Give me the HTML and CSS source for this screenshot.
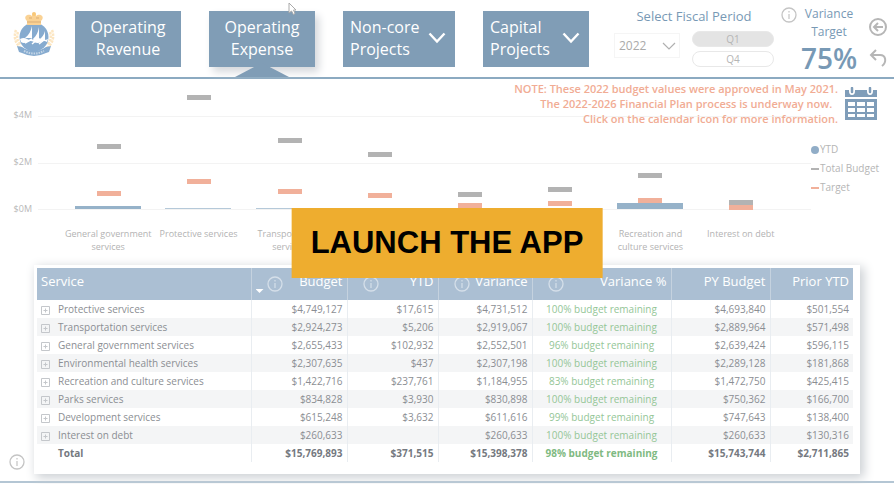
FILE: index.html
```html
<!DOCTYPE html>
<html lang="en">
<head>
<meta charset="utf-8">
<meta name="viewport" content="width=device-width, initial-scale=1">
<title>Operating Expense</title>
<link rel="stylesheet" href="styles.css">
</head>
<body>
<svg class="defs" aria-hidden="true">
  <symbol id="info" viewBox="0 0 16 16"><circle cx="8" cy="8" r="7" fill="none" stroke="currentColor" stroke-width="1.3"/><path d="M8 7v5M8 4v1.5" stroke="currentColor" stroke-width="1.2"/></symbol>
  <symbol id="chevron" viewBox="0 0 18 12"><path d="M1.5 1.5 9 9.5l7.500-8" fill="none" stroke="currentColor" stroke-width="2.400"/></symbol>
  <symbol id="plus" viewBox="0 0 9 9"><path d="M.5.5h8v8h-8zM2.500 4.500h4M4.500 2.500v4" fill="none" stroke="currentColor"/></symbol>
</svg>
<div class="app">
  <header class="header">
    <svg class="logo" viewBox="0 0 42 46" role="img" aria-label="View Royal">
      <g fill="none" stroke="#fce6c2" stroke-width="2.400" stroke-dasharray="2.500 1">
        <path d="M3 18C0 26 3 32 8 36"/><path d="M39 18c3 8 0 14-5 18"/>
        <path d="M5 20c-2 6 0 10 3 13"/><path d="M37 20c2 6 0 10-3 13"/>
      </g>
      <circle cx="21" cy="25" r="14.500" fill="#86abcf"/>
      <path d="M7 27q4-2 7 0t7 0 7 0 7 0l-1 3q-3-2-6 0t-7 0-7 0-6 0z" fill="#fff"/>
      <path d="M19 14v12h-7c4-3 6-7 7-12zM26 15v12h-6c4-4 5-7 6-12zM32 19v9h-6c3-3 5-5 6-9z" fill="#fff"/>
      <path d="M12 31 19 27M19 32l6-5M26 32l5-4" stroke="#fff" stroke-width="1.500"/>
      <path d="M14 9C9 4 16 1 19 4c0-4 4-4 4 0 3-3 10 0 5 5v4H14z" fill="#fad294"/>
      <circle cx="21" cy="2" r="2" fill="#f8c878"/>
      <path d="M14 10h14M16 6h3M23 6h3" stroke="#d9ad77"/>
      <path d="m4 34 5 1q12 8 24 0l5-1-2 6-3 1q-12 6-24 0l-3-1z" fill="#86abcf"/>
      <path d="M11 39q10 5 20 0" fill="none" stroke="#c5d6e6" stroke-width="2" stroke-dasharray="1.500 1"/>
    </svg>
    <nav class="nav">
      <button class="tab">Operating<br>Revenue</button>
      <div class="active">
        <button class="tab" aria-current="page">Operating<br>Expense</button>
      </div>
      <button class="tab menu"><span>Non-core<br>Projects</span><svg class="chevron"><use href="#chevron"/></svg></button>
      <button class="tab menu narrow"><span>Capital<br>Projects</span><svg class="chevron"><use href="#chevron"/></svg></button>
    </nav>
    <div class="period">
      <label for="year">Select Fiscal Period</label>
      <div class="controls">
        <div class="year"><select id="year"><option>2022</option></select><svg class="thin" viewBox="0 0 14 8"><path d="m1 1 6 6 6-6" fill="none" stroke="currentColor" stroke-width="1.200"/></svg></div>
        <div class="quarters"><button aria-pressed="true">Q1</button><button>Q4</button></div>
      </div>
    </div>
    <div class="variance">
      <svg class="info"><use href="#info"/></svg>
      <div class="target">Variance<br>Target<strong>75%</strong></div>
    </div>
    <div class="actions">
      <button aria-label="Back"><svg viewBox="0 0 20 20"><g fill="none" stroke="#b6b6b6" stroke-width="2"><circle cx="10" cy="10" r="8"/><path d="M15 10H6M10 6l-4 4 4 4"/></g></svg></button>
      <button aria-label="Undo"><svg viewBox="0 0 20 20"><path d="M8 2 3 7l5 5M3 7h9c6 0 7 7 2 11" fill="none" stroke="#b6b6b6" stroke-width="2"/></svg></button>
    </div>
    <svg class="pointer" viewBox="0 0 9 13"><path d="M1 1v10l2.500-2 2 3.500 1.500-1L5.500 8H8z" fill="#fff" stroke="#aaa"/></svg>
  </header>

  <section class="overview">
    <div class="chart">
      <div class="axis"><span>$4M</span><span>$2M</span><span>$0M</span></div>
      <svg class="plot" viewBox="0 0 773 124" preserveAspectRatio="none" role="img" aria-label="YTD, total budget and target by service">
        <path d="M0 28.500h773M0 75.500h773M0 121.500h773" stroke="#f3f3f3"/>
        <g fill="#96b2c9"><path d="M37 118h66v3H37z"/><path d="M127 120h66v1h-66zM218 120h66v1h-66z" opacity=".7"/><path d="M579 115h66v6h-66z"/></g>
        <g fill="#b3b3b3"><path d="M59 56h24v5H59zM149 7h24v5h-24zM240 50h24v5h-24zM330 64h24v5h-24zM420 104h24v5h-24zM510 99h24v5h-24zM600 85h24v5h-24zM691 112h24v5h-24z"/></g>
        <g fill="#f1b09a"><path d="M59 103h24v5H59zM149 91h24v5h-24zM240 101h24v5h-24zM330 105h24v5h-24zM420 115h24v5h-24zM510 113h24v5h-24zM600 110h24v5h-24zM691 117h24v5h-24z"/></g>
      </svg>
      <div class="legend"><span class="ytd">YTD</span><span>Total Budget</span><span class="goal">Target</span></div>
      <div class="names"><span>General government services</span><span>Protective services</span><span>Transportation services</span><span aria-label="Environmental health services"></span><span aria-label="Parks services"></span><span aria-label="Development services"></span><span>Recreation and culture services</span><span>Interest on debt</span></div>
    </div>
    <div class="notice">
      <p>NOTE: These 2022 budget values were approved in May 2021.<br>The 2022-2026 Financial Plan process is underway now.&nbsp;&nbsp;<br>Click on the calendar icon for more information.</p>
      <button aria-label="Calendar"><svg viewBox="0 0 34 34"><path d="M1 3h32v7H1z" fill="#7f9db9"/><path d="M5 0h6v4q0 4-3 4T5 4zM23 0h6v4q0 4-3 4t-3-4z" fill="#fff"/><path d="M8 1v4M26 1v4" stroke="#7f9db9" stroke-width="2.500" stroke-linecap="round"/><path d="M1 12h32v21H1z" fill="#7f9db9"/><path d="M4 15h7v4H4zM13 15h8v4h-8zM23 15h7v4h-7zM4 21h7v4H4zM13 21h8v4h-8zM23 21h7v4h-7zM4 27h7v3H4zM13 27h8v3h-8zM23 27h7v3h-7z" fill="#fff"/></svg></button>
    </div>
  </section>

  <main class="details">
    <svg class="info"><use href="#info"/></svg>
    <div class="card">
      <table>
        <colgroup><col class="c-service"><col class="c-budget"><col class="c-ytd"><col class="c-var"><col class="c-pct"><col class="c-py"><col class="c-prior"></colgroup>
        <thead><tr>
          <th>Service</th>
          <th><div class="head"><i class="sort"></i><svg class="info"><use href="#info"/></svg><span>Budget</span></div></th>
          <th><div class="head"><svg class="info"><use href="#info"/></svg><span>YTD</span></div></th>
          <th><div class="head"><svg class="info"><use href="#info"/></svg><span>Variance</span></div></th>
          <th><div class="head"><svg class="info"><use href="#info"/></svg><span>Variance %</span></div></th>
          <th>PY Budget</th><th>Prior YTD</th>
        </tr></thead>
        <tbody>
          <tr><td><svg class="plus"><use href="#plus"/></svg>Protective services</td><td>$4,749,127</td><td>$17,615</td><td>$4,731,512</td><td>100% budget remaining</td><td>$4,693,840</td><td>$501,554</td></tr>
          <tr><td><svg class="plus"><use href="#plus"/></svg>Transportation services</td><td>$2,924,273</td><td>$5,206</td><td>$2,919,067</td><td>100% budget remaining</td><td>$2,889,964</td><td>$571,498</td></tr>
          <tr><td><svg class="plus"><use href="#plus"/></svg>General government services</td><td>$2,655,433</td><td>$102,932</td><td>$2,552,501</td><td>96% budget remaining</td><td>$2,639,424</td><td>$596,115</td></tr>
          <tr><td><svg class="plus"><use href="#plus"/></svg>Environmental health services</td><td>$2,307,635</td><td>$437</td><td>$2,307,198</td><td>100% budget remaining</td><td>$2,289,128</td><td>$181,868</td></tr>
          <tr><td><svg class="plus"><use href="#plus"/></svg>Recreation and culture services</td><td>$1,422,716</td><td>$237,761</td><td>$1,184,955</td><td>83% budget remaining</td><td>$1,472,750</td><td>$425,415</td></tr>
          <tr><td><svg class="plus"><use href="#plus"/></svg>Parks services</td><td>$834,828</td><td>$3,930</td><td>$830,898</td><td>100% budget remaining</td><td>$750,362</td><td>$166,700</td></tr>
          <tr><td><svg class="plus"><use href="#plus"/></svg>Development services</td><td>$615,248</td><td>$3,632</td><td>$611,616</td><td>99% budget remaining</td><td>$747,643</td><td>$138,400</td></tr>
          <tr><td><svg class="plus"><use href="#plus"/></svg>Interest on debt</td><td>$260,633</td><td></td><td>$260,633</td><td>100% budget remaining</td><td>$260,633</td><td>$130,316</td></tr>
        </tbody>
        <tfoot><tr><td>Total</td><td>$15,769,893</td><td>$371,515</td><td>$15,398,378</td><td>98% budget remaining</td><td>$15,743,744</td><td>$2,711,865</td></tr></tfoot>
      </table>
    </div>
  </main>
  <button class="launch">LAUNCH THE APP</button>
</div>
</body>
</html>
```
FILE: styles.css
```css
* { box-sizing: border-box; }
body { margin: 0; background: #fff; font-family: "Open Sans", "Noto Sans", sans-serif; font-size: 10px; color: #8b8e93; }
button, select { font: inherit; margin: 0; padding: 0; border: 0; background: none; color: inherit; }
svg { display: block; flex: none; }
.defs { position: absolute; width: 0; height: 0; }
.app { position: relative; overflow: hidden; padding-bottom: 2px; }
.info { width: 16px; height: 16px; color: #c4c4c4; }

.header { position: relative; display: flex; align-items: flex-start; height: 79px; padding: 5px 6px 0 13px; border-bottom: 2px solid #8caac1; }
.logo { width: 42px; height: 46px; margin-top: 7px; }
.nav { display: flex; gap: 28px; margin: 6px auto 0 20px; }
.tab { width: 106px; height: 56px; background: #809db6; color: #fff; font-size: 16px; line-height: 22px; }
.tab.menu { display: flex; align-items: center; justify-content: space-between; width: 112px; padding: 0 9px 2px 7px; text-align: left; }
.tab.narrow { width: 106px; }
.tab:not(.menu) { padding-bottom: 2px; }
.chevron { width: 18px; height: 12px; }
.active { position: relative; }
.active .tab { position: relative; box-shadow: 4px 5px 8px #d5d8dc; }
.active::after { content: ""; position: absolute; left: 26px; top: 52px; width: 54px; height: 14px; background: #809db6; clip-path: polygon(50% 0, 100% 100%, 0 100%); }
.pointer { position: absolute; left: 288px; top: 2px; width: 9px; height: 13px; }

.period { width: 160px; margin-right: 7px; }
.period label { display: block; color: #7899b5; font-size: 13px; line-height: 22px; text-align: center; }
.controls { display: flex; align-items: flex-start; justify-content: space-between; margin-top: 4px; }
.year { display: grid; align-items: center; width: 66px; height: 25px; margin-top: 2px; border: 1px solid #f5f5f5; }
.year > * { grid-area: 1 / 1; }
.year select { appearance: none; width: 100%; height: 100%; padding-left: 4px; color: #aaa; font-size: 12px; }
.thin { width: 14px; height: 8px; margin-right: 3px; justify-self: end; color: #b0b0b0; pointer-events: none; }
.quarters { display: grid; gap: 4px; width: 82px; }
.quarters button { height: 16px; border: 1px solid #e8e8e8; border-radius: 8px; color: #b5b5b5; font-size: 10px; line-height: 14px; }
.quarters [aria-pressed] { background: #e4e4e4; }
.variance { display: flex; margin-right: 7px; }
.variance .info { margin-top: 2px; }
.target { width: 64px; color: #7899b5; font-size: 12px; line-height: 18px; text-align: center; }
.target strong { display: block; font-size: 28px; font-weight: 600; line-height: 34px; }
.actions { display: grid; gap: 11px; margin-top: 12px; }
.actions svg { width: 20px; height: 20px; }

.overview { display: grid; }
.overview > * { grid-area: 1 / 1; }
.chart { display: grid; grid-template-columns: 38px 1fr 83px; padding-top: 9px; }
.axis { display: grid; align-content: end; gap: 35px; padding: 0 6px 3px 0; color: #b8b8b8; font-size: 9px; line-height: 12px; text-align: right; height: 130px; }
.plot { width: 100%; height: 124px; }
.legend { padding-top: 52px; color: #b5b5b5; line-height: 19px; }
.legend span { display: flex; align-items: center; gap: 1px; white-space: nowrap; }
.legend span::before { content: ""; width: 8px; height: 2px; background: #b3b3b3; }
.legend .goal::before { background: #f1b09a; }
.legend .ytd::before { height: 8px; border-radius: 4px; background: #91adc7; }
.names { grid-column: 2; display: grid; grid-template-columns: repeat(8, 1fr); padding: 9px 25px 0; color: #b3b3b3; font-size: 9px; line-height: 13px; text-align: center; }
.notice { display: flex; justify-content: flex-end; align-items: flex-start; gap: 6px; padding: 2px 16px 0 0; }
.notice p { margin: 0; color: #f1ac94; font-size: 11px; font-weight: 600; line-height: 15px; text-align: right; }
.notice button { margin-top: 6px; }
.notice svg { width: 34px; height: 34px; }

.details { display: flex; align-items: flex-end; gap: 9px; padding: 12px 34px 7px 9px; border-bottom: 2px solid #b4c6d4; }
.details > .info { margin-bottom: 4px; }
.card { flex: 1; padding: 3px 7px 12px 3px; background: #fff; box-shadow: 3px 3px 10px 1px #ccd0d4; }
table { width: 100%; table-layout: fixed; border-collapse: collapse; line-height: 17px; }
.c-service { width: 214px; } .c-budget { width: 96px; } .c-ytd { width: 91px; } .c-var { width: 94px; } .c-pct { width: 139px; } .c-py { width: 99px; } .c-prior { width: 83px; }
th { height: 32px; padding: 3px 4px 0; background: #abbfd3; border-right: 1px solid #c5d2df; color: #fff; font-size: 13px; font-weight: 400; line-height: 20px; text-align: right; vertical-align: top; }
th:first-child { text-align: left; }
.head { display: flex; justify-content: flex-end; }
.head span { flex: 1; white-space: nowrap; }
.head .info { margin: 5px 0 0 11px; color: #d5dfe9; }
.sort { width: 8px; height: 4px; margin-top: 18px; background: #fff; clip-path: polygon(0 0, 100% 0, 50% 100%); }
.head .sort + .info { margin-left: 3px; }
td { height: 18px; padding: 0 4px; border-right: 1px solid #e9edf1; text-align: right; white-space: nowrap; }
th:last-child, td:last-child { border-right: 0; }
td:first-child { text-align: left; }
td:nth-child(5) { color: #94c697; text-align: center; }
tbody tr:nth-child(even) { background: #f4f5f6; }
.plus { display: inline-block; width: 9px; height: 9px; margin-right: 8px; vertical-align: -2px; color: #c4c7cb; }
tfoot { color: #75797f; font-weight: 700; }
tfoot td:first-child { padding-left: 21px; }
tfoot td:nth-child(5) { color: #7fba82; }

.launch { position: absolute; left: 50%; top: 50%; transform: translate(-50%, -50%); padding: 17px 19px; background: #eead2f; color: #000; font-family: "Liberation Sans", Arial, sans-serif; font-size: 31px; font-weight: 700; line-height: 36px; white-space: nowrap; }
```
